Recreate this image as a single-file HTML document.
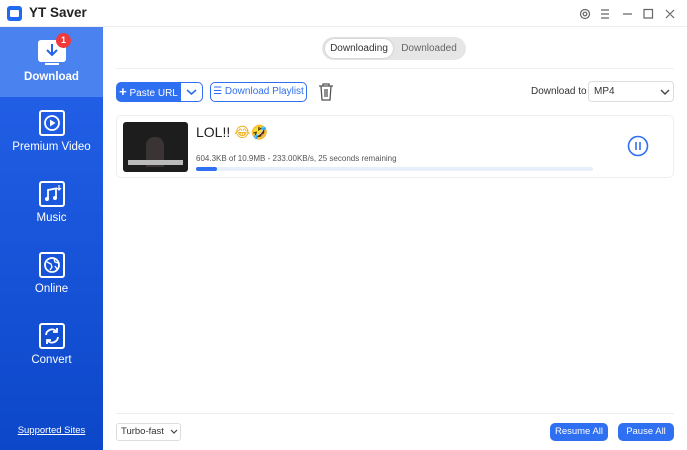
<!DOCTYPE html><html><head><style>
*{margin:0;padding:0;box-sizing:border-box}
body{width:687px;height:450px;overflow:hidden;font-family:"Liberation Sans",sans-serif;background:#fff;position:relative;font-size:11px;color:#333;white-space:nowrap}
.a{position:absolute}
.side{left:0;top:27px;width:103px;height:423px;background:linear-gradient(#2563eb,#0c47c9)}
.item{position:absolute;left:0;width:103px;text-align:center;color:#fff;font-size:11.5px}
.ico{width:26px;height:26px;border:2px solid #fff;border-radius:3px;margin:0 auto 5px;position:relative}
.ico svg{position:absolute;left:0;top:0}
.btn{position:absolute;border-radius:5px;font-size:10px;text-align:center}
</style></head><body>
<div class="a" style="left:7px;top:6px;width:15px;height:15px;background:#1f6af0;border-radius:3px"><div class="a" style="left:3px;top:4px;width:9px;height:7px;background:#fff;border-radius:1px"></div></div>
<div class="a" style="left:29px;top:5px;font-size:13.5px;font-weight:bold;color:#222">YT Saver</div>
<svg class="a" style="left:578px;top:7px" width="100" height="14" fill="none" stroke="#666" stroke-width="1.2"><circle cx="7" cy="7" r="4.5"/><circle cx="7" cy="7" r="1.8"/><path d="M23 3h8M23 7h8M23 11h8M45 7h9M66 2.5h8.5v8.5H66zM88 3l8 8M96 3l-8 8"/></svg>
<div class="a" style="left:0;top:26px;width:687px;height:1px;background:#eee"></div>
<div class="a side"></div>
<div class="a" style="left:0;top:27px;width:103px;height:70px;background:#4a82f0"></div>
<div class="item" style="top:40px"><div class="ico" style="width:28px;height:22px;background:#fff;border:none;margin-bottom:1px"><svg width="28" height="22"><path d="M14 4v10M9 10l5 5 5-5" stroke="#2563eb" stroke-width="2" fill="none"/></svg></div><div style="width:14px;height:2px;background:#fff;margin:0 auto 6px"></div><b>Download</b></div>
<div class="a" style="left:56px;top:33px;width:15px;height:15px;border-radius:50%;background:#ef3b3b;color:#fff;font-size:9px;font-weight:bold;text-align:center;line-height:15px">1</div>
<div class="item" style="top:110px"><div class="ico"><svg width="22" height="22"><circle cx="11" cy="11" r="7" stroke="#fff" stroke-width="1.8" fill="none"/><path d="M9 7.5v7l5.5-3.5z" fill="#fff"/></svg></div>Premium Video</div>
<div class="item" style="top:181px"><div class="ico"><svg width="22" height="22"><path d="M7 16V7l8-1.5V15" stroke="#fff" stroke-width="1.8" fill="none"/><circle cx="6" cy="16" r="2" fill="#fff"/><circle cx="14" cy="15" r="2" fill="#fff"/><path d="M18 2v5M16 5l2 2 2-2" stroke="#fff" stroke-width="1.2" fill="none"/></svg></div>Music</div>
<div class="item" style="top:252px"><div class="ico"><svg width="22" height="22"><circle cx="11" cy="11" r="7" stroke="#fff" stroke-width="1.8" fill="none"/><path d="M6 8l4 2 1 3-2 3M13 5l1 3 3 1M14 12l2 3" stroke="#fff" stroke-width="1.3" fill="none"/></svg></div>Online</div>
<div class="item" style="top:323px"><div class="ico"><svg width="22" height="22"><path d="M5 10a6 6 0 0 1 10-4M17 12a6 6 0 0 1-10 4" stroke="#fff" stroke-width="1.8" fill="none"/><path d="M16 3v4h-4M6 19v-4h4" stroke="#fff" stroke-width="1.8" fill="none"/></svg></div>Convert</div>
<div class="item" style="top:425px;font-size:9.5px;text-decoration:underline">Supported Sites</div>
<div class="a" style="left:322px;top:37px;width:144px;height:23px;border-radius:12px;background:#e6e6e6"></div>
<div class="a" style="left:325px;top:39px;width:68px;height:19px;border-radius:10px;background:#fff;box-shadow:0 0 2px #bbb;font-size:10px;text-align:center;line-height:19px;color:#333">Downloading</div>
<div class="a" style="left:393px;top:39px;width:72px;line-height:19px;font-size:10px;text-align:center;color:#666">Downloaded</div>
<div class="a" style="left:116px;top:68px;width:558px;height:1px;background:#eef0f5"></div>
<div class="btn" style="left:116px;top:82px;width:87px;height:20px;background:#2f6ff1;color:#fff"><div class="a" style="left:0;top:0;width:65px;line-height:20px"><b style="font-size:13px">+</b> Paste URL</div><div class="a" style="left:65px;top:1px;width:21px;height:18px;background:#fff;border-radius:0 4px 4px 0"><svg width="21" height="18"><path d="M6 7l4.5 4 4.5-4" stroke="#2f6ff1" stroke-width="1.6" fill="none"/></svg></div></div>
<div class="btn" style="left:210px;top:82px;width:97px;height:20px;border:1.5px solid #2f6ff1;color:#2f6ff1;line-height:17px">☰ Download Playlist</div>
<svg class="a" style="left:318px;top:83px" width="16" height="18" fill="none" stroke="#555" stroke-width="1.3"><path d="M1 3h14M5 3V1h6v2M3 3l1 14h8l1-14M7 6v8M9 6v8"/></svg>
<div class="a" style="left:531px;top:86px;font-size:10px;color:#333">Download to</div>
<div class="a" style="left:588px;top:81px;width:86px;height:21px;border:1px solid #ddd;border-radius:4px;font-size:10px;line-height:19px;padding-left:5px">MP4<svg class="a" style="left:71px;top:6px" width="10" height="8"><path d="M1 2l4 4 4-4" stroke="#444" stroke-width="1.4" fill="none"/></svg></div>
<div class="a" style="left:116px;top:115px;width:558px;height:63px;border:1px solid #eceef3;border-radius:5px"></div>
<div class="a" style="left:123px;top:122px;width:65px;height:50px;background:#1d1d1d;border-radius:3px;overflow:hidden"><div class="a" style="left:23px;top:15px;width:18px;height:30px;background:#3a3434;border-radius:8px 8px 0 0"></div><div class="a" style="left:5px;top:38px;width:55px;height:5px;background:#bbb"></div></div>
<div class="a" style="left:196px;top:124px;font-size:14px;color:#222">LOL!! <span style="font-family:'DejaVu Sans';color:#f0b020">😂🤣</span></div>
<div class="a" style="left:196px;top:154px;font-size:8px;color:#555">604.3KB of 10.9MB -  233.00KB/s, 25 seconds remaining</div>
<div class="a" style="left:196px;top:167px;width:397px;height:4px;background:#e8effc;border-radius:2px"><div style="width:21px;height:4px;background:#2f6ff1;border-radius:2px"></div></div>
<svg class="a" style="left:627px;top:135px" width="22" height="22"><circle cx="11" cy="11" r="9.5" stroke="#2f6ff1" stroke-width="1.6" fill="none"/><path d="M9 7v8M13 7v8" stroke="#2f6ff1" stroke-width="1.6"/></svg>
<div class="a" style="left:116px;top:413px;width:558px;height:1px;background:#eee"></div>
<div class="a" style="left:116px;top:423px;width:65px;height:18px;border:1px solid #ddd;border-radius:3px;font-size:9.5px;line-height:16px;padding-left:4px">Turbo-fast<svg class="a" style="left:53px;top:5px" width="8" height="6"><path d="M1 1l3 3 3-3" stroke="#444" stroke-width="1.2" fill="none"/></svg></div>
<div class="btn" style="left:550px;top:423px;width:58px;height:18px;background:#2f6ff1;color:#fff;line-height:18px;font-size:9.5px">Resume All</div>
<div class="btn" style="left:618px;top:423px;width:56px;height:18px;background:#2f6ff1;color:#fff;line-height:18px;font-size:9.5px">Pause All</div>
</body></html>
